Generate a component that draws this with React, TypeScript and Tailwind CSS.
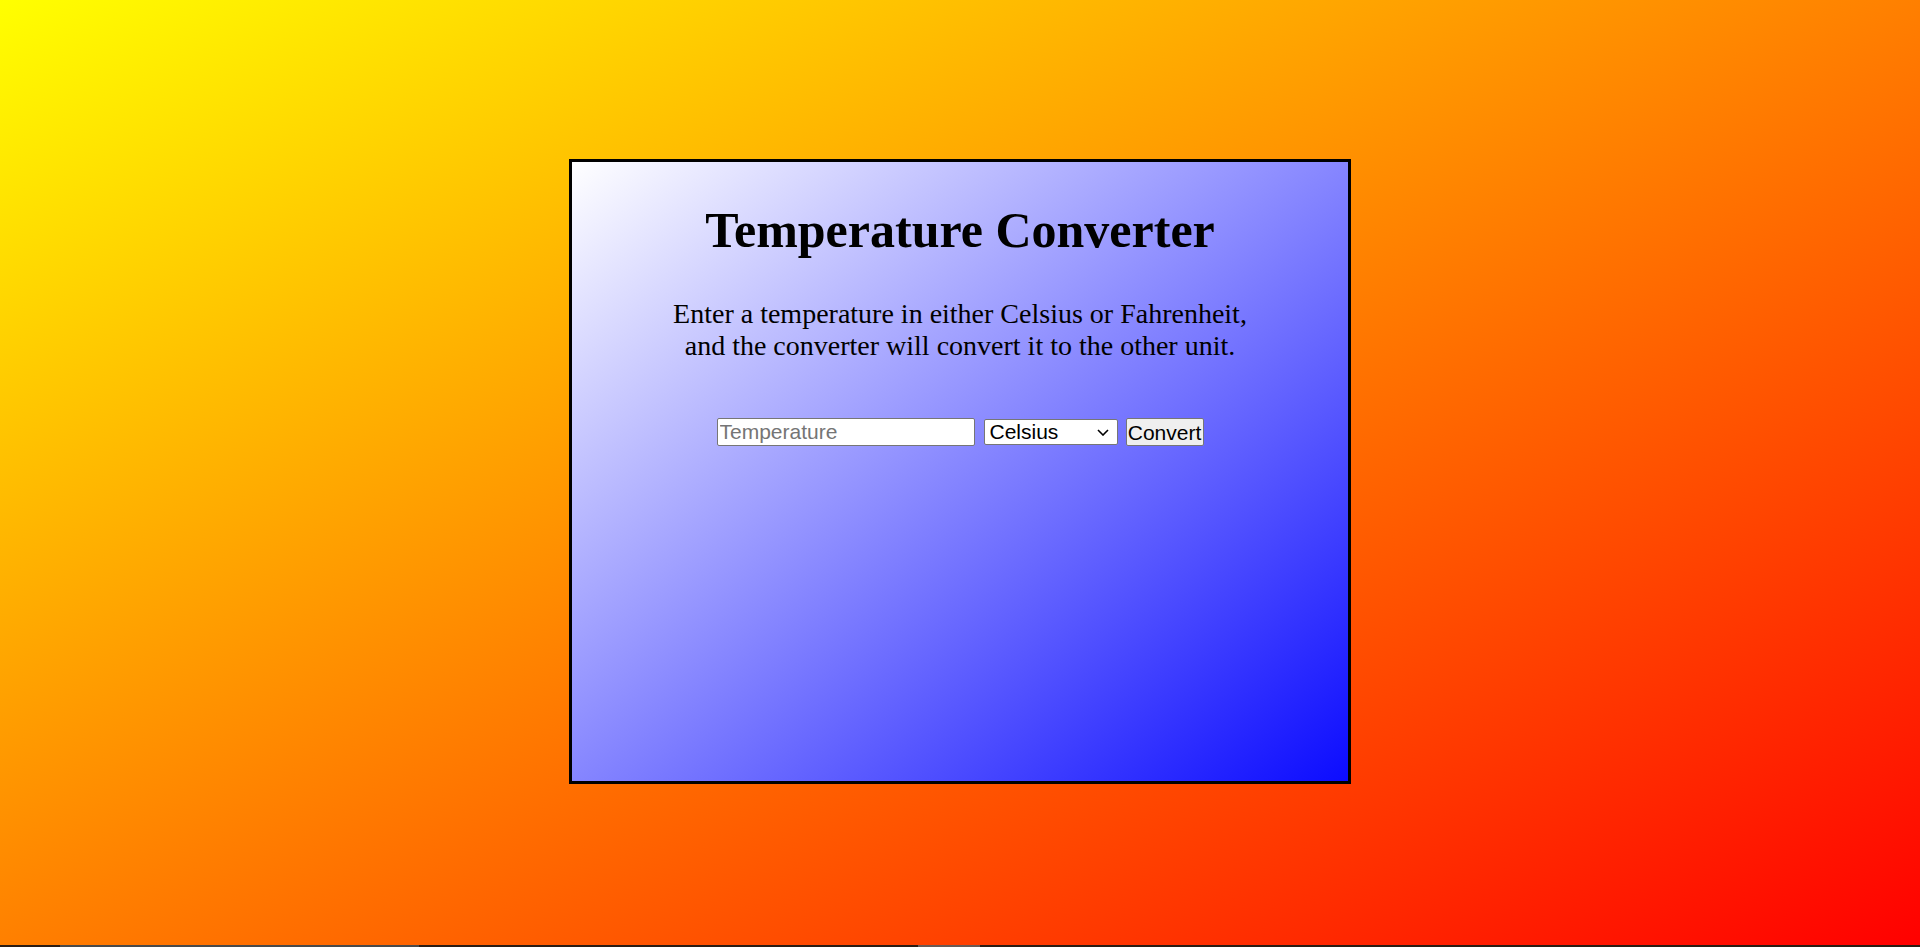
import React from "react";

export default function App() {
  return (
    <div className="w-[1920px] h-[947px] flex flex-col overflow-hidden">
      <div className="h-[945px] w-full bg-[linear-gradient(to_bottom_right,#ffff00,#ff0000)] flex justify-center pt-[159px]">
        <div className="w-[782px] h-[625px] border-[3px] border-black bg-[linear-gradient(to_bottom_right,#ffffff,#0c0cff)] flex flex-col items-center pt-[40px] text-black">
          <h1 className="font-['Liberation_Serif',serif] font-bold text-[50px] leading-[57px] m-0">
            Temperature Converter
          </h1>
          <p className="font-['Liberation_Serif',serif] text-[28px] leading-[32px] text-center mt-[39px]">
            Enter a temperature in either Celsius or Fahrenheit,
            <br />
            and the converter will convert it to the other unit.
          </p>
          <div className="flex items-center mt-[56px] font-['Liberation_Sans',Arial,sans-serif] text-[21px]">
            <input
              type="text"
              placeholder="Temperature"
              className="w-[258px] h-[28px] bg-white border border-[#767676] rounded-[2px] px-[2px] text-[21px] text-black placeholder:text-[#757575] outline-none"
            />
            <div className="relative ml-[9px] h-[26px]">
              <select
                defaultValue="celsius"
                className="block appearance-none w-[134px] h-[26px] bg-white border border-[#767676] rounded-[2px] text-[21px] text-black pl-[5px] py-0 leading-[24px]"
              >
                <option value="celsius">Celsius</option>
                <option value="fahrenheit">Fahrenheit</option>
              </select>
              <svg
                className="absolute right-[9px] top-[10px] pointer-events-none"
                width="12"
                height="7"
                viewBox="0 0 12 7"
                fill="none"
              >
                <path d="M1 1l5 5 5-5" stroke="#000" strokeWidth="1.6" />
              </svg>
            </div>
            <button className="ml-[8px] w-[78px] h-[28px] bg-[#efefef] border border-[#767676] rounded-[2px] text-[21px] text-black leading-none px-0">
              Convert
            </button>
          </div>
        </div>
      </div>
      <div className="h-[2px] w-full bg-[#2b1d14] flex">
        <div className="w-[60px]" />
        <div className="w-[359px] bg-[#4a4a4a]" />
        <div className="w-[499px]" />
        <div className="w-[62px] bg-[#6a5a55]" />
      </div>
    </div>
  );
}
